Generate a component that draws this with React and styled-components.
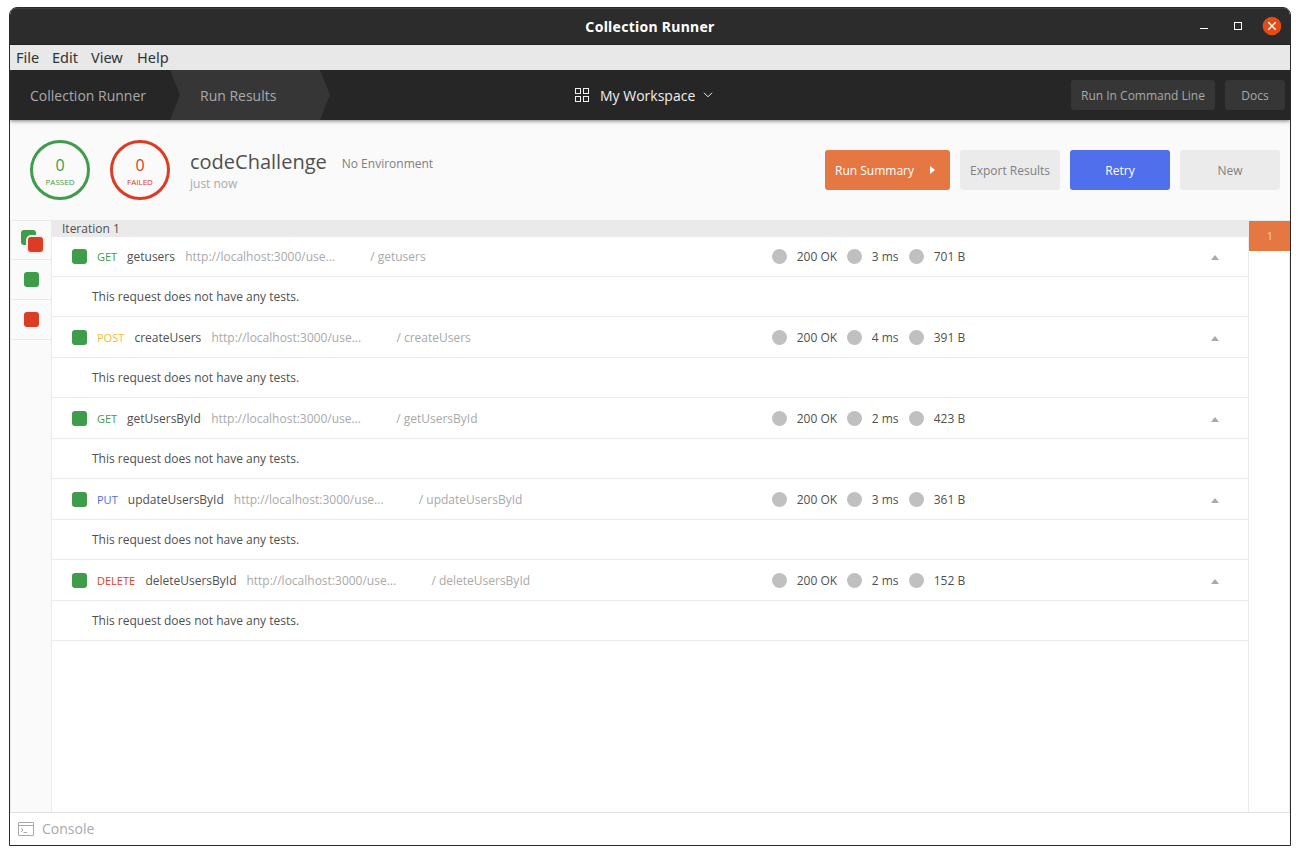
import React from "react";
import styled, { createGlobalStyle } from "styled-components";

const GlobalStyle = createGlobalStyle`
  * { box-sizing: border-box; }
  body { margin: 0; background: #fff; }
`;

const Page = styled.div`
  width: 1300px;
  height: 855px;
  padding: 7px 9px 9px;
  font-family: "Open Sans", "Noto Sans", sans-serif;
  font-size: 12px;
  color: #505050;
`;

const Window = styled.div`
  display: flex;
  flex-direction: column;
  width: 1282px;
  height: 839px;
  border: 1px solid #2b2b2b;
  border-radius: 8px 8px 0 0;
  overflow: hidden;
  background: #fff;
`;

const TitleBar = styled.header`
  display: grid;
  grid-template-columns: 1fr auto 1fr;
  align-items: center;
  flex: none;
  height: 37px;
  padding: 0 9px;
  background: #2c2c2c;
  border-top: 1px solid #3d3d3d;
  border-bottom: 1px solid #222;
`;

const WindowTitle = styled.h1`
  grid-column: 2;
  margin: 0;
  font: 700 14px/20px "Noto Sans", sans-serif;
  letter-spacing: 0.28px;
  color: #fff;
`;

const WindowControls = styled.div`
  display: flex;
  justify-content: flex-end;
  align-items: center;
  padding-bottom: 2px;
  svg { display: block; }
`;

const MenuBar = styled.nav`
  display: flex;
  align-items: center;
  gap: 12px;
  flex: none;
  height: 25px;
  padding: 0 6px 2px;
  background: #e8e8e8;
  font: 14.5px/22px "Noto Sans", sans-serif;
  color: #2f3436;
`;

const MenuItem = styled.span`
  width: ${(p) => p.$width}px;
  white-space: nowrap;
`;

const NavBar = styled.div`
  display: flex;
  align-items: center;
  position: relative;
  z-index: 1;
  flex: none;
  height: 50px;
  padding-right: 5px;
  background: #262626;
  box-shadow: 0 1px 4px rgba(0, 0, 0, 0.5);
  clip-path: inset(0 0 -8px 0);
`;

const Crumb = styled.div`
  display: flex;
  align-items: center;
  flex: none;
  width: ${(p) => p.$width}px;
  height: 50px;
  padding-left: ${(p) => p.$indent}px;
  font-size: 14px;
  color: #a9a9a9;
  background: ${(p) => (p.$active ? "#363636" : "transparent")};
  clip-path: ${(p) =>
    p.$active
      ? "polygon(0 0, 150px 0, 160px 50%, 150px 100%, 0 100%, 10px 50%)"
      : "none"};
`;

const Workspace = styled.div`
  display: flex;
  align-items: center;
  flex: 1;
  padding-left: 245px;
  font-size: 14px;
  color: #f0f0f0;
  span { margin: 0 8px 0 11px; }
`;

const NavButton = styled.button`
  width: ${(p) => p.$width}px;
  height: 30px;
  margin-left: 10px;
  padding: 0;
  border: 0;
  border-radius: 3px;
  background: #363636;
  color: #a9a9a9;
  font: 12px "Open Sans", sans-serif;
`;

const RunHeader = styled.section`
  display: flex;
  align-items: center;
  flex: none;
  height: 100px;
  padding: 0 10px 0 20px;
  background: #fafafa;
`;

const Counter = styled.div`
  display: flex;
  flex-direction: column;
  align-items: center;
  width: 60px;
  height: 60px;
  margin-right: 20px;
  padding-top: 12px;
  border: 3px solid ${(p) => p.$color};
  border-radius: 50%;
  color: ${(p) => p.$color};
`;

const Count = styled.span`
  font-size: 16px;
  line-height: 20px;
`;

const CountLabel = styled.span`
  padding-top: 1px;
  font-size: 8px;
  line-height: 12px;
`;

const RunInfo = styled.div`
  flex: 1;
`;

const RunTitle = styled.div`
  display: flex;
  align-items: center;
  gap: 15px;
  height: 28px;
  margin-top: -1px;
`;

const RunName = styled.h2`
  margin: 0;
  font-size: 20px;
  line-height: 28px;
  font-weight: 400;
`;

const Environment = styled.span`
  padding-top: 3px;
  color: #808080;
`;

const RunTime = styled.div`
  line-height: 16px;
  color: #a9a9a9;
`;

const Button = styled.button`
  display: flex;
  align-items: center;
  justify-content: ${(p) => (p.$arrow ? "space-between" : "center")};
  width: ${(p) => (p.$arrow ? 125 : 100)}px;
  height: 40px;
  margin-left: 10px;
  padding: ${(p) => (p.$arrow ? "0 15px 0 10px" : "0")};
  border: 0;
  border-radius: 3px;
  background: ${(p) => p.$bg || "#ebebeb"};
  color: ${(p) => (p.$bg ? "#fff" : "#808080")};
  font: 12px "Open Sans", sans-serif;
  white-space: nowrap;
`;

const Main = styled.main`
  display: flex;
  flex: 1;
  min-height: 0;
  border: 1px solid #eaeaea;
  border-bottom-color: #dfdfdf;
`;

const FilterBar = styled.aside`
  width: 41px;
  background: #fafafa;
  border-right: 1px solid #eaeaea;
`;

const Filter = styled.div`
  display: flex;
  align-items: center;
  justify-content: center;
  height: ${(p) => p.$height || 40}px;
  border-bottom: 1px solid #eaeaea;
`;

const Square = styled.span`
  flex: none;
  width: 15px;
  height: 15px;
  border-radius: 3px;
  background: ${(p) => p.$color};
`;

const Stack = styled.div`
  position: relative;
  width: 22px;
  height: 22px;
  margin: 2px 0 0 2px;
  ${Square} { position: absolute; left: 0; top: 0; }
  ${Square} + ${Square} {
    left: 7px;
    top: 7px;
    box-shadow: 0 0 0 2px #ebebeb;
  }
`;

const Results = styled.section`
  flex: 1;
  min-width: 0;
`;

const IterationTitle = styled.div`
  height: 16px;
  padding-left: 10px;
  line-height: 15px;
  background: #eaeaea;
`;

const RequestRow = styled.div`
  display: flex;
  align-items: center;
  height: ${(p) => (p.$first ? 40 : 41)}px;
  padding: ${(p) => (p.$first ? 0 : 1)}px 29px 0 20px;
  border-bottom: 1px solid #eaeaea;
  svg { margin-top: 2px; }
`;

const Request = styled.div`
  display: flex;
  align-items: center;
  width: 700px;
  white-space: nowrap;
`;

const Method = styled.span`
  margin: 0 10px;
  width: ${(p) => p.$width}px;
  font-size: 11px;
  line-height: 15px;
  color: ${(p) => p.$color};
`;

const RequestName = styled.span`
  margin-right: 10px;
  width: ${(p) => p.$width}px;
`;

const Url = styled.span`
  width: 150px;
  margin-right: 35px;
  overflow: hidden;
  text-overflow: ellipsis;
  color: #a9a9a9;
`;

const Path = styled.span`
  color: #a9a9a9;
`;

const Stats = styled.div`
  display: flex;
  align-items: center;
  flex: 1;
`;

const Dot = styled.span`
  width: 15px;
  height: 15px;
  border-radius: 50%;
  background: #c0c0c0;
`;

const Stat = styled.span`
  width: ${(p) => p.$width}px;
  padding-left: 9.7px;
  white-space: nowrap;
`;

const EmptyTests = styled.div`
  display: flex;
  align-items: center;
  height: 40px;
  padding-left: 40px;
  border-bottom: 1px solid #eaeaea;
`;

const IterationList = styled.aside`
  width: 41px;
  border-left: 1px solid #eaeaea;
`;

const IterationTab = styled.div`
  height: 30px;
  margin-right: -1px;
  background: #e57743;
  color: #f0d6c8;
  font-size: 11px;
  line-height: 29px;
  padding-left: 1px;
  text-align: center;
`;

const Footer = styled.footer`
  display: flex;
  align-items: center;
  gap: 8px;
  flex: none;
  height: 32px;
  padding-left: 8px;
  font-size: 14px;
  color: #a9a9a9;
`;

const FooterLabel = styled.span`
  padding-bottom: 2px;
`;

const GREEN = "#3f9c4b";
const RED = "#db3c23";

const requests = [
  { method: "GET", color: GREEN, mw: 20, name: "getusers", nw: 48.2, time: "3 ms", size: "701 B" },
  { method: "POST", color: "#f0bc3c", mw: 27.4, name: "createUsers", nw: 67, time: "4 ms", size: "391 B" },
  { method: "GET", color: GREEN, mw: 20, name: "getUsersById", nw: 74.2, time: "2 ms", size: "423 B" },
  { method: "PUT", color: "#4a6ee0", mw: 20.8, name: "updateUsersById", nw: 96, time: "3 ms", size: "361 B" },
  { method: "DELETE", color: RED, mw: 38.4, name: "deleteUsersById", nw: 91, time: "2 ms", size: "152 B" },
];

export default function App() {
  return (
    <Page>
      <GlobalStyle />
      <Window>
        <TitleBar>
          <WindowTitle>Collection Runner</WindowTitle>
          <WindowControls>
            <svg width="82" height="20" viewBox="0 0 82 20" fill="none" stroke="#fff">
              <path d="M1 12.5h8" />
              <rect x="35.5" y="6.5" width="7" height="7" />
              <circle cx="73" cy="10" r="9.3" fill="#e24c17" stroke="none" />
              <path d="M69.3 6.3l7.4 7.4M76.7 6.3l-7.4 7.4" strokeWidth="1.3" />
            </svg>
          </WindowControls>
        </TitleBar>
        <MenuBar>
          <MenuItem $width={24}>File</MenuItem>
          <MenuItem $width={27}>Edit</MenuItem>
          <MenuItem $width={34}>View</MenuItem>
          <MenuItem $width={32}>Help</MenuItem>
        </MenuBar>
        <NavBar>
          <Crumb $width={160} $indent={20}>Collection Runner</Crumb>
          <Crumb $width={160} $indent={30} $active>Run Results</Crumb>
          <Workspace>
            <svg width="14" height="14" viewBox="0 0 14 14" fill="none" stroke="#f0f0f0">
              <rect x=".5" y=".5" width="5" height="5" />
              <rect x="8.5" y=".5" width="5" height="5" />
              <rect x=".5" y="8.5" width="5" height="5" />
              <rect x="8.5" y="8.5" width="5" height="5" />
            </svg>
            <span>My Workspace</span>
            <svg width="10" height="6" viewBox="0 0 10 6" fill="none" stroke="#f0f0f0">
              <path d="M1 .8l4 4 4-4" />
            </svg>
          </Workspace>
          <NavButton $width={144}>Run In Command Line</NavButton>
          <NavButton $width={60}>Docs</NavButton>
        </NavBar>
        <RunHeader>
          <Counter $color={GREEN}>
            <Count>0</Count>
            <CountLabel>PASSED</CountLabel>
          </Counter>
          <Counter $color={RED}>
            <Count>0</Count>
            <CountLabel>FAILED</CountLabel>
          </Counter>
          <RunInfo>
            <RunTitle>
              <RunName>codeChallenge</RunName>
              <Environment>No Environment</Environment>
            </RunTitle>
            <RunTime>just now</RunTime>
          </RunInfo>
          <Button $bg="#e57743" $arrow>
            Run Summary
            <svg width="5" height="8" viewBox="0 0 5 8" fill="#fff">
              <path d="M0 0l5 4-5 4z" />
            </svg>
          </Button>
          <Button>Export Results</Button>
          <Button $bg="#4f6fec">Retry</Button>
          <Button>New</Button>
        </RunHeader>
        <Main>
          <FilterBar>
            <Filter $height={39}>
              <Stack>
                <Square $color={GREEN} />
                <Square $color={RED} />
              </Stack>
            </Filter>
            <Filter><Square $color={GREEN} /></Filter>
            <Filter><Square $color={RED} /></Filter>
          </FilterBar>
          <Results>
            <IterationTitle>Iteration 1</IterationTitle>
            {requests.map((r, i) => (
              <React.Fragment key={r.name}>
                <RequestRow $first={i === 0}>
                  <Request>
                    <Square $color={GREEN} />
                    <Method $color={r.color} $width={r.mw}>{r.method}</Method>
                    <RequestName $width={r.nw}>{r.name}</RequestName>
                    <Url>http://localhost:3000/use...</Url>
                    <Path>/ {r.name}</Path>
                  </Request>
                  <Stats>
                    <Dot />
                    <Stat $width={60}>200 OK</Stat>
                    <Dot />
                    <Stat $width={47}>{r.time}</Stat>
                    <Dot />
                    <Stat $width={60}>{r.size}</Stat>
                  </Stats>
                  <svg width="8" height="5" viewBox="0 0 8 5" fill="#a9a9a9">
                    <path d="M4 0l4 5H0z" />
                  </svg>
                </RequestRow>
                <EmptyTests>This request does not have any tests.</EmptyTests>
              </React.Fragment>
            ))}
          </Results>
          <IterationList>
            <IterationTab>1</IterationTab>
          </IterationList>
        </Main>
        <Footer>
          <svg width="16" height="14" viewBox="0 0 16 14" fill="none" stroke="#a9a9a9">
            <rect x=".5" y=".5" width="15" height="13" rx=".5" />
            <path d="M.5 3.5h15M3 6.2l2 1.8-2 1.8M5.5 10.5h3.5" />
          </svg>
          <FooterLabel>Console</FooterLabel>
        </Footer>
      </Window>
    </Page>
  );
}
